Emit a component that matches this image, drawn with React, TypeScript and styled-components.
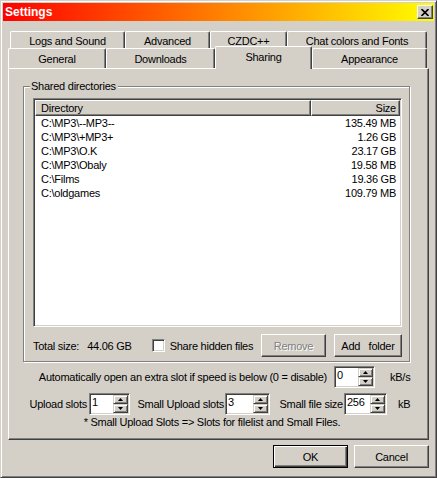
import React from "react";
import styled, { createGlobalStyle, css } from "styled-components";

const GlobalStyle = createGlobalStyle`
  html, body {
    margin: 0;
    padding: 0;
    background: #d4d0c8;
  }
  body {
    font-family: "Liberation Sans", Arial, sans-serif;
    font-size: 11px;
    letter-spacing: -0.25px;
    color: #000;
  }
`;

const raised = css`
  border: 1px solid;
  border-color: #fff #404040 #404040 #fff;
  box-shadow: inset -1px -1px #808080;
  background: #d4d0c8;
`;

const sunken = css`
  border: 1px solid;
  border-color: #808080 #fff #fff #808080;
  box-shadow: inset 1px 1px #404040, inset -1px -1px #d4d0c8;
  background: #fff;
`;

const Window = styled.div`
  width: 437px;
  height: 478px;
  box-sizing: border-box;
  border: 1px solid;
  border-color: #d4d0c8 #404040 #404040 #d4d0c8;
  box-shadow: inset 1px 1px #fff, inset -1px -1px #808080;
  padding: 2px;
  background: #d4d0c8;
  display: flex;
  flex-direction: column;
`;

const TitleBar = styled.div`
  height: 18px;
  flex: none;
  display: flex;
  align-items: center;
  justify-content: space-between;
  padding: 0 1px 0 1px;
  background: linear-gradient(to right, #ff0000, #ff8000 50%, #ffff00);
`;

const TitleText = styled.span`
  color: #fff;
  font-weight: bold;
  font-size: 12px;
  letter-spacing: 0;
  padding-left: 1px;
`;

const CloseButton = styled.div`
  box-sizing: border-box;
  width: 16px;
  height: 14px;
  display: flex;
  align-items: center;
  justify-content: center;
  border: 1px solid;
  border-color: #fff #404040 #404040 #fff;
  box-shadow: inset -1px -1px #808080;
  background: #d4d0c8;
`;

const Body = styled.div`
  flex: 1;
  display: flex;
  flex-direction: column;
  padding: 10px 5px 0;
`;

const TabRow = styled.div<{ $height: number; $indent: number }>`
  display: flex;
  height: ${(p) => p.$height}px;
  margin-left: ${(p) => p.$indent}px;
`;

const Tab = styled.div<{ $width: number; $shift?: number; $active?: boolean }>`
  box-sizing: border-box;
  width: ${(p) => p.$width}px;
  height: 100%;
  flex: none;
  display: flex;
  align-items: center;
  justify-content: center;
  padding-top: ${(p) => p.$shift ?? 0}px;
  border-top: 1px solid #fff;
  border-left: 1px solid #fff;
  border-right: 1px solid #404040;
  border-radius: 2px 2px 0 0;
  box-shadow: inset -1px 0 #808080;
  background: #d4d0c8;
  white-space: nowrap;
  ${(p) =>
    p.$active &&
    css`
      height: 23px;
      margin-top: -2px;
      padding-bottom: 2px;
      position: relative;
      z-index: 1;
    `}
`;

const Panel = styled.div`
  box-sizing: border-box;
  height: 372px;
  flex: none;
  border: 1px solid;
  border-color: #fff #404040 #404040 #fff;
  box-shadow: inset -1px -1px #808080;
  display: flex;
  flex-direction: column;
`;

const GroupBox = styled.div`
  box-sizing: border-box;
  width: 387px;
  height: 276px;
  margin: 17px 0 0 14px;
  padding: 0 7px 0 9px;
  border: 1px solid #808080;
  box-shadow: inset 1px 1px #fff, 1px 1px #fff;
  display: flex;
  flex-direction: column;
`;

const GroupTitle = styled.div`
  align-self: flex-start;
  margin: -7px 0 0 -3px;
  padding: 0 2px 0 1px;
  line-height: 13px;
  background: #d4d0c8;
`;

const ListView = styled.div`
  box-sizing: border-box;
  height: 229px;
  margin-top: 5px;
  padding: 1px;
  ${sunken};
  display: flex;
  flex-direction: column;
  overflow: hidden;
`;

const ListHeader = styled.div`
  display: flex;
  height: 16px;
  flex: none;
`;

const HeaderCell = styled.div<{ $width?: number; $right?: boolean }>`
  box-sizing: border-box;
  ${raised};
  ${(p) => (p.$width ? `width: ${p.$width}px; flex: none;` : "flex: 1;")}
  display: flex;
  align-items: center;
  justify-content: ${(p) => (p.$right ? "flex-end" : "flex-start")};
  padding: 0 3px 0 5px;
  line-height: 13px;
`;

const ListRow = styled.div`
  display: flex;
  height: 14px;
  line-height: 14px;
`;

const Cell = styled.div<{ $width?: number; $right?: boolean }>`
  box-sizing: border-box;
  ${(p) => (p.$width ? `width: ${p.$width}px; flex: none;` : "flex: 1;")}
  text-align: ${(p) => (p.$right ? "right" : "left")};
  padding: ${(p) => (p.$right ? "0 4px 0 0" : "0 0 0 6px")};
  white-space: nowrap;
`;

const GroupFooter = styled.div`
  display: flex;
  align-items: center;
  height: 23px;
  margin-top: 7px;
`;

const TotalValue = styled.span`
  margin-left: 8px;
`;

const CheckWrap = styled.label`
  display: flex;
  align-items: center;
  margin-left: 20px;
`;

const CheckBox = styled.span`
  box-sizing: border-box;
  width: 13px;
  height: 13px;
  ${sunken};
  margin-right: 5px;
`;

const ButtonPair = styled.div`
  display: flex;
  gap: 8px;
  margin-left: auto;
`;

const Button = styled.button<{ $width: number; $default?: boolean }>`
  box-sizing: border-box;
  width: ${(p) => p.$width}px;
  height: 23px;
  padding: 0;
  font: inherit;
  letter-spacing: inherit;
  color: #000;
  white-space: pre;
  ${raised};
  &:disabled {
    color: #808080;
    text-shadow: 1px 1px #fff;
  }
  ${(p) =>
    p.$default &&
    css`
      border: 1px solid #000;
      box-shadow: inset 1px 1px #fff, inset -1px -1px #404040,
        inset -2px -2px #808080;
    `}
`;

const AutoRow = styled.div`
  display: flex;
  align-items: center;
  justify-content: flex-end;
  margin-top: 4px;
  padding-right: 13px;
`;

const SlotsRow = styled.div`
  display: flex;
  align-items: center;
  margin-top: 5px;
  padding-left: 14px;
`;

const FieldLabel = styled.span<{ $width?: number; $gapLeft?: number; $gapRight?: number }>`
  flex: none;
  ${(p) => (p.$width ? `width: ${p.$width}px;` : "")}
  text-align: right;
  white-space: nowrap;
  margin-left: ${(p) => p.$gapLeft ?? 0}px;
  margin-right: ${(p) => p.$gapRight ?? 0}px;
`;

const Unit = styled.span<{ $width: number; $gapLeft: number }>`
  flex: none;
  width: ${(p) => p.$width}px;
  margin-left: ${(p) => p.$gapLeft}px;
`;

const SpinBox = styled.div<{ $width: number }>`
  box-sizing: border-box;
  width: ${(p) => p.$width}px;
  height: 22px;
  flex: none;
  padding: 1px;
  ${sunken};
  display: flex;
`;

const SpinValue = styled.div`
  flex: 1;
  padding: 1px 0 0 1px;
  line-height: 13px;
`;

const SpinButtons = styled.div`
  width: 15px;
  display: flex;
  flex-direction: column;
`;

const SpinButton = styled.div`
  box-sizing: border-box;
  flex: 1;
  display: flex;
  align-items: center;
  justify-content: center;
  border: 1px solid;
  border-color: #d4d0c8 #404040 #404040 #d4d0c8;
  box-shadow: inset 1px 1px #fff, inset -1px -1px #808080;
  background: #d4d0c8;
`;

const Note = styled.div`
  margin-top: 1px;
  padding-right: 13px;
  line-height: 13px;
  text-align: center;
`;

const DialogButtons = styled.div`
  display: flex;
  justify-content: flex-end;
  gap: 6px;
  margin-top: 5px;
`;

const Arrow = ({ down }: { down?: boolean }) => (
  <svg width="5" height="3" viewBox="0 0 5 3">
    <polygon points={down ? "0,0 5,0 2.5,3" : "0,3 5,3 2.5,0"} fill="#000" />
  </svg>
);

const Spin = ({ value, width }: { value: string; width: number }) => (
  <SpinBox $width={width}>
    <SpinValue>{value}</SpinValue>
    <SpinButtons>
      <SpinButton>
        <Arrow />
      </SpinButton>
      <SpinButton>
        <Arrow down />
      </SpinButton>
    </SpinButtons>
  </SpinBox>
);

const topTabs = [
  { label: "Logs and Sound", width: 115 },
  { label: "Advanced", width: 85 },
  { label: "CZDC++", width: 77 },
  { label: "Chat colors and Fonts", width: 140 },
];

const frontTabs = [
  { label: "General", width: 98 },
  { label: "Downloads", width: 109 },
  { label: "Sharing", width: 97, active: true },
  { label: "Appearance", width: 115 },
];

const dirs = [
  { path: "C:\\MP3\\--MP3--", size: "135.49 MB" },
  { path: "C:\\MP3\\+MP3+", size: "1.26 GB" },
  { path: "C:\\MP3\\O.K", size: "23.17 GB" },
  { path: "C:\\MP3\\Obaly", size: "19.58 MB" },
  { path: "C:\\Films", size: "19.36 GB" },
  { path: "C:\\oldgames", size: "109.79 MB" },
];

export default function App() {
  return (
    <>
      <GlobalStyle />
      <Window>
        <TitleBar>
          <TitleText>Settings</TitleText>
          <CloseButton>
            <svg width="8" height="7" viewBox="0 0 8 7">
              <path d="M0.5 0 L7.5 7 M7.5 0 L0.5 7" stroke="#000" strokeWidth="1.6" />
            </svg>
          </CloseButton>
        </TitleBar>

        <Body>
          <TabRow $height={17} $indent={2}>
            {topTabs.map((t) => (
              <Tab key={t.label} $width={t.width} $shift={2}>
                {t.label}
              </Tab>
            ))}
          </TabRow>
          <TabRow $height={20} $indent={0}>
            {frontTabs.map((t) => (
              <Tab key={t.label} $width={t.width} $active={t.active}>
                {t.label}
              </Tab>
            ))}
          </TabRow>

          <Panel>
            <GroupBox>
              <GroupTitle>Shared directories</GroupTitle>
              <ListView>
                <ListHeader>
                  <HeaderCell $width={276}>Directory</HeaderCell>
                  <HeaderCell $right>Size</HeaderCell>
                </ListHeader>
                {dirs.map((d) => (
                  <ListRow key={d.path}>
                    <Cell $width={276}>{d.path}</Cell>
                    <Cell $right>{d.size}</Cell>
                  </ListRow>
                ))}
              </ListView>
              <GroupFooter>
                <span>Total size:</span>
                <TotalValue>44.06 GB</TotalValue>
                <CheckWrap>
                  <CheckBox />
                  Share hidden files
                </CheckWrap>
                <ButtonPair>
                  <Button $width={65} disabled>
                    Remove
                  </Button>
                  <Button $width={68}>{"Add   folder"}</Button>
                </ButtonPair>
              </GroupFooter>
            </GroupBox>

            <AutoRow>
              <FieldLabel $gapRight={7}>
                Automatically open an extra slot if speed is below (0 = disable)
              </FieldLabel>
              <Spin value="0" width={41} />
              <Unit $width={25} $gapLeft={15}>
                kB/s
              </Unit>
            </AutoRow>

            <SlotsRow>
              <FieldLabel $width={64} $gapRight={2}>
                Upload slots
              </FieldLabel>
              <Spin value="1" width={41} />
              <FieldLabel $width={87} $gapLeft={7} $gapRight={1}>
                Small Upload slots
              </FieldLabel>
              <Spin value="3" width={45} />
              <FieldLabel $width={65} $gapLeft={8} $gapRight={1}>
                Small file size
              </FieldLabel>
              <Spin value="256" width={43} />
              <Unit $width={14} $gapLeft={11}>
                kB
              </Unit>
            </SlotsRow>

            <Note>* Small Upload Slots =&gt; Slots for filelist and Small Files.</Note>
          </Panel>

          <DialogButtons>
            <Button $width={75} $default>
              OK
            </Button>
            <Button $width={75}>Cancel</Button>
          </DialogButtons>
        </Body>
      </Window>
    </>
  );
}
